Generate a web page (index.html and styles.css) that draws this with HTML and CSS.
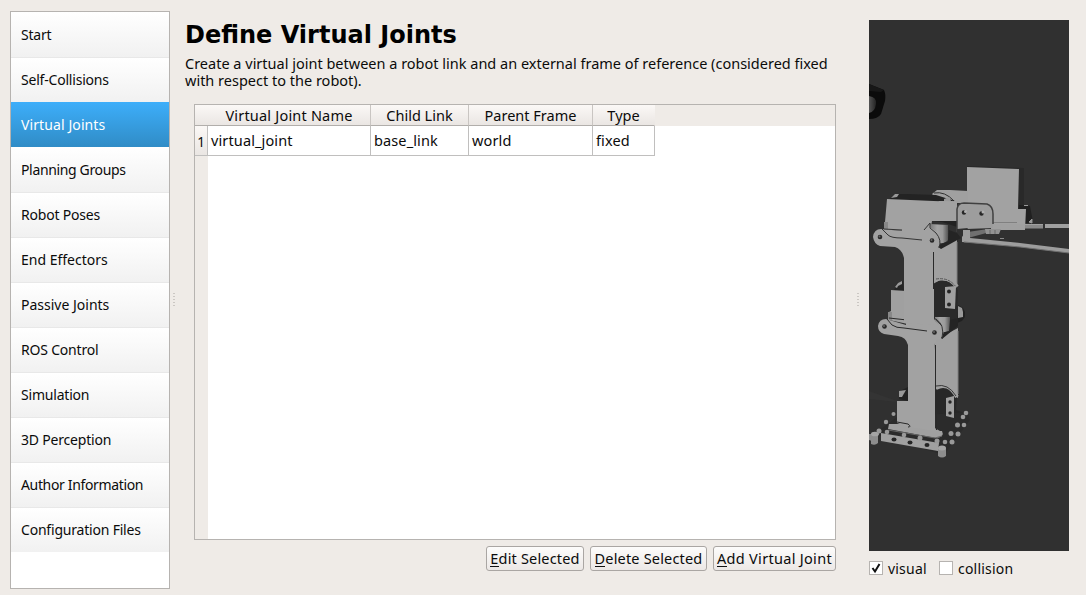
FILE: index.html
```html
<!DOCTYPE html>
<html lang="en">
<head>
<meta charset="utf-8">
<title>Define Virtual Joints</title>
<link rel="stylesheet" href="styles.css">
</head>
<body>
<div class="window">
  <nav class="steps">
    <div class="step">Start</div>
    <div class="step">Self-Collisions</div>
    <div class="step active">Virtual Joints</div>
    <div class="step tight">Planning Groups</div>
    <div class="step">Robot Poses</div>
    <div class="step even">End Effectors</div>
    <div class="step even">Passive Joints</div>
    <div class="step">ROS Control</div>
    <div class="step">Simulation</div>
    <div class="step">3D Perception</div>
    <div class="step tight">Author Information</div>
    <div class="step">Configuration Files</div>
  </nav>
  <div class="splitter"></div>
  <main class="panel">
    <h1>Define Virtual Joints</h1>
    <p class="intro">Create a virtual joint between a robot link and an external frame of reference (considered fixed<br>with respect to the robot).</p>
    <div class="table">
      <div class="head">
        <div class="corner"></div><div class="th wide">Virtual Joint Name</div><div class="th">Child Link</div><div class="th">Parent Frame</div><div class="th last">Type</div>
      </div>
      <div class="row">
        <div class="num">1</div><div class="td">virtual_joint</div><div class="td">base_link</div><div class="td">world</div><div class="td">fixed</div>
      </div>
      <div class="gutter"></div>
    </div>
    <div class="actions">
      <button class="btn edit"><span class="key">E</span>dit Selected</button>
      <button class="btn delete"><span class="key">D</span>elete Selected</button>
      <button class="btn add"><span class="key">A</span>dd Virtual Joint</button>
    </div>
  </main>
  <div class="splitter right"></div>
  <aside class="preview">
    <svg class="scene" viewBox="869 20 200 531" width="200" height="531">
      <defs>
        <linearGradient id="cyl"><stop offset="0" stop-color="#777"/><stop offset=".4" stop-color="#a4a4a4"/><stop offset=".7" stop-color="#9a9a9a"/><stop offset="1" stop-color="#555"/></linearGradient>
        <linearGradient id="lens"><stop offset="0" stop-color="#555"/><stop offset="1" stop-color="#222"/></linearGradient>
      </defs>
      <rect x="869" y="20" width="200" height="531" fill="#303030"/>
      <!-- camera -->
      <path d="M869 84L884 90Q886 94 885 101L881 114Q878 119 869 119Z" fill="#0b0b0b"/>
      <path d="M869 84L884 90L881 92L869 91Z" fill="#171717"/>
      <path d="M869 96Q877 97 876 104Q875 112 869 113Z" fill="url(#lens)"/>
      <!-- rear column -->
      <path d="M933 249L957 237V287L933 290ZM935 340L958 328V398L935 390Z" fill="#a0a0a0"/>
      <path d="M957 242V286M958 331V394" stroke="#808080"/>
      <!-- gripper motor and rods -->
      <path d="M967 166L1024 168V208L1019 222H968Z" fill="#292929"/>
      <path d="M1019 205L1030 206L1033 222L1019 224Z" fill="#202020"/>
      <path d="M1024 205.500H1028M1029 222L1032 219V223Z" stroke="#999" fill="#999"/>
      <path d="M967 167L1019 169L1018 209L1026 209L1025 230L991 229V224H967Z" fill="#a2a2a2"/>
      <path d="M993 222.500H1017" stroke="#808080"/>
      <path d="M991 224L1069 224V228L1025 228L1025 230H991Z" fill="#a0a0a0"/>
      <path d="M1025 225V228.500H1044V225" fill="#8a8a8a"/><path d="M1044 224V229" stroke="#303030" stroke-width="2"/>
      <path d="M961 233L988 229L990 232L968 238Z" fill="#707070"/>
      <path d="M985 229H1001L999 234H986Z" fill="#929292"/><path d="M990 230V234M995 230V234" stroke="#686868"/>
      <path d="M962 230H970V238L1020 243L1069 249V253L1020 247L962 242Z" fill="#9d9d9d"/>
      <path d="M964 242L1020 247L1069 253" stroke="#707070" fill="none"/>
      <path d="M1000 238.500H1004" stroke="#888"/>
      <!-- upper housing -->
      <path d="M932 194L937 190H950L968 191V203H940Z" fill="#a0a0a0"/>
      <path d="M934 193Q945 191 954 201" stroke="#303030" fill="none"/>
      <path d="M891 198L895 194L907 194L936 195L955 201L887 201Z" fill="#232323"/>
      <path d="M891 198L895 194H899L897 197Z" fill="#999"/>
      <path d="M944 199L949 197L951 201H944Z" fill="#999"/>
      <path d="M887 199L957 202V221L932 221L930 232L886 230L885 222Z" fill="#a2a2a2"/>
      <path d="M932 221H957V227L942 222Z" fill="#222"/>
      <path d="M884 222H888V231H884Z" fill="#888"/>
      <path d="M957 233V208Q958 203 964 203L987 204Q993 206 993 213V228L966 229L963 234Z" fill="#9d9d9d"/>
      <path d="M957 232V209Q958 203 964 203L987 204Q993 206 993 214V224" fill="none" stroke="#404040" stroke-width="1.5"/>
      <g fill="#262626"><circle cx="964" cy="212.500" r="2.200"/><circle cx="981.500" cy="213.500" r="2.200"/></g>
      <g fill="#b0b0b0"><circle cx="965.500" cy="211.500" r="1.500"/><circle cx="983" cy="212" r="1.500"/></g>
      <path d="M957 229L968 228L962 237L957 236Z" fill="#303030"/>
      <path d="M963 230H969V240L963 241Z" fill="#9d9d9d"/>
      <path d="M930 224L948 225V240Q945 244 939 243L932 236Z" fill="url(#cyl)"/>
      <path d="M949 230L957 233L961 238L941 249L937 246L948 241Z" fill="#242424"/>
      <!-- middle motor assembly -->
      <path d="M933 284L940 280L953 282L958 290L957 317L942 339L933 328Z" fill="#292929"/>
      <path d="M935 280Q948 274 957 287" fill="none" stroke="#a0a0a0" stroke-width="4"/>
      <path d="M936 279Q949 277 956 287" fill="none" stroke="#555" stroke-dasharray="3 1"/>
      <path d="M945 287L956 286L955 309L945 308Z" fill="#a0a0a0"/>
      <g fill="#252525"><circle cx="949" cy="291.500" r="2"/><circle cx="949" cy="304.500" r="2"/></g>
      <path d="M958 305L963 308L965 312V317L962 321L957 323Z" fill="#202020"/><path d="M958 306L962 308L963 312V317L958 318" fill="#999"/>
      <path d="M895 288L897 283L903 281L904 290H894Z" fill="#242424"/><path d="M895 287L898 283L902 281V284L898 286L897 288Z" fill="#999"/>
      <path d="M891 290L905 291V320L936 320V330L889 320V312L891 311Z" fill="#a0a0a0"/>
      <path d="M888 312H892V320H888Z" fill="#888"/>
      <path d="M935 317L950 317V331L942 333L933 327Z" fill="url(#cyl)"/>
      <path d="M950 320L958 318V326L942 339L941 333L949 331Z" fill="#242424"/>
      <!-- bottom motor assembly -->
      <path d="M935 390L943 386L954 392L957 398L956 410L968 414L942 435L933 432Z" fill="#282828"/>
      <path d="M936 388Q948 381 957 397" fill="none" stroke="#a0a0a0" stroke-width="4"/>
      <path d="M936 386Q948 383 956 396" fill="none" stroke="#383838"/>
      <path d="M899 399L900 391L908 387V401Z" fill="#222"/><path d="M899 391L906 390L902 397H899Z" fill="#999"/>
      <!-- base -->
      <path d="M869 391L897 401V402L869 399Z" fill="#343434"/>
      <path d="M874 434L897 417L968 412L970 420L944 455Z" fill="#2b2b2b"/>
      <path d="M946 398L954 396V418L946 416Z" fill="#a0a0a0"/>
      <g fill="#252525"><circle cx="950" cy="402" r="1.700"/><circle cx="950" cy="413" r="1.700"/></g>
      <path d="M881 433L939 443L938 451L881 441Z" fill="#a0a0a0"/>
      <path d="M889 424L909 424V427H933L940 431H942Q945 437 936 438L888 429Z" fill="#a0a0a0"/>
      <path d="M888 430L935 438L942 436" stroke="#666" fill="none"/>
      <g fill="#252525"><ellipse cx="894" cy="439.500" rx="2.500" ry="2"/><ellipse cx="910" cy="442.500" rx="2.500" ry="2"/><ellipse cx="927" cy="445" rx="2.500" ry="2"/></g>
      <g fill="#8d8d8d"><path d="M871 434H878V443Q875 446 871 444ZM938 448H946V456Q942 459 938 456ZM869 434H872V441L869 440Z"/></g>
      <g fill="#a5a5a5"><ellipse cx="875" cy="434" rx="4" ry="2.300"/><ellipse cx="942" cy="448" rx="4" ry="2.500"/></g>
      <g fill="#999"><circle cx="893.500" cy="414" r="2"/><circle cx="886" cy="422" r="2.200"/><circle cx="879" cy="431" r="2.500"/><circle cx="887" cy="432" r="2.300"/><circle cx="904" cy="435" r="2.300"/><circle cx="920" cy="438" r="2.500"/><circle cx="937" cy="441" r="2.500"/><circle cx="945" cy="442" r="2.300"/><circle cx="952" cy="442" r="2.500"/><circle cx="958" cy="434" r="2.500"/><circle cx="951" cy="433.500" r="2.500"/><circle cx="964" cy="425" r="2.300"/><circle cx="957.500" cy="425" r="2.500"/><circle cx="963" cy="417" r="2.300"/><circle cx="966" cy="413" r="2.300"/></g>
      <!-- lower arm -->
      <path d="M897 401H908V345Q906 337 898 336L884 334Q878 332 878 326Q879 319 886 319L906 325V320H934L943 329Q945 338 937 340Q934 342 935 350V431L909 427L897 423Z" fill="#a2a2a2"/>
      <path d="M935.500 345V391M936.500 408V430" stroke="#292929"/>
      <path d="M887 319L892 325Q896 328 904 328L927 331M889 318L907 320M897 422L908 424Q912 427 908 427" fill="none" stroke="#292929"/>
      <!-- upper arm -->
      <path d="M904 292V258Q902 249 895 247L880 246Q874 244 873 237Q874 229 881 229L902 231V227H930L937 232Q941 236 940 244Q937 250 934 252V319L936 325L904 323Z" fill="#a2a2a2"/>
      <path d="M933.500 252V289M934.500 295V318L942 326" fill="none" stroke="#292929"/>
      <path d="M882 229L888 235Q891 238 902 238L922 240M884 229L902 230M924 230L930 223V228L936 233Q942 240 939 248M936 319Q945 325 942 338" fill="none" stroke="#343434"/>
      <g fill="#292929"><circle cx="880" cy="237" r="2.300"/><circle cx="932" cy="240.500" r="2.300"/><circle cx="884.500" cy="326.500" r="2.300"/><circle cx="934.500" cy="332.500" r="2.300"/></g>
      <g fill="#666"><circle cx="879.500" cy="236.500" r="1"/><circle cx="931.500" cy="240" r="1"/><circle cx="884" cy="326" r="1"/><circle cx="934" cy="332" r="1"/></g>
    </svg>
    <div class="toggles">
      <span class="box"><svg width="12" height="12" viewBox="0 0 12 12"><path d="M2.500 6L5 9.500L9.500 2" fill="none" stroke="#111" stroke-width="2"/></svg></span><span class="visual">visual</span>
      <span class="box"></span><span class="collision">collision</span>
    </div>
  </aside>
</div>
</body>
</html>
```
FILE: styles.css
```css
* { box-sizing: border-box; }
body { margin: 0; background: #efebe7; color: #0b0b0b; font: 14px/17px "Noto Sans", sans-serif; }
.window { display: flex; width: 1086px; height: 595px; padding-left: 10px; overflow: hidden; white-space: nowrap; }
.steps { width: 160px; height: 578px; margin-top: 11px; border: 1px solid #b6b3b0; background: #fff; letter-spacing: -.2px; }
.step { height: 45px; padding: 14px 10px; border-bottom: 1px solid #e8e8e8; background: linear-gradient(#fff, #f1f1f1); }
.step:first-child { height: 46px; }
.step:nth-child(2) { height: 44px; border-bottom: 0; }
.step:nth-child(2), .active { padding-top: 13px; }
.active + .step { height: 46px; }
.step:nth-child(n+5) { padding-top: 13px; }
.step:last-child { height: 44px; border-bottom: 0; }
.tight { letter-spacing: -.35px; }
.even { letter-spacing: 0; }
.active { height: 45px; padding-top: 14px; color: #fff; border: 0; background: linear-gradient(#3daefa, #308cc6); letter-spacing: .1px; }
.splitter { width: 2px; height: 15px; margin: 293px 10px 0 3px; background: repeating-linear-gradient(#cbc7c3 0 1px, transparent 1px 3px); }
.panel { width: 651px; padding-top: 20px; font-size: 14.5px; }
h1 { margin: 0; font: bold 24px/30px "DejaVu Sans", sans-serif; color: #000; }
.intro { height: 34px; margin: 5px 0 15px; }
.table { width: 642px; height: 436px; margin-left: 9px; border: 1px solid #b6b3b0; background: #fff; display: flex; flex-direction: column; }
.head, .row { display: grid; grid-template-columns: 13px 163px 98px 124px 62px; }
.head { height: 21px; flex: none; background: #efebe7; }
.th, .corner { height: 21px; background: linear-gradient(#fbf8f6, #eae6e3); border-bottom: 1px solid #b1aeab; text-align: center; line-height: 20px; }
.th { border-right: 1px solid #c9c5c2; }
.th.last { border-right-color: transparent; }
.wide { letter-spacing: .2px; }
.row { height: 30px; flex: none; }
.num, .td { height: 30px; border: 1px solid #c0bfbe; border-width: 0 1px 1px 0; line-height: 28px; }
.num { background: linear-gradient(#fbf8f6, #eae6e3); text-align: center; font-size: 13.5px; line-height: 32px; }
.td { padding-left: 3px; letter-spacing: .12px; }
.gutter { width: 13px; flex: 1; background: #efebe7; }
.actions { display: flex; justify-content: flex-end; gap: 6px; margin: 6px 0 0; }
.btn { height: 25px; padding: 0; border: 1px solid #aaa6a3; border-radius: 3px; background: linear-gradient(#fdfcfb, #ece8e6); font: inherit; color: inherit; letter-spacing: .18px; }
.edit { width: 98px; }
.delete { width: 117px; }
.add { width: 123px; letter-spacing: .3px; }
.key { display: inline-block; height: 17px; border-bottom: 1px solid #111; }
.right { margin-left: 21px; }
.preview { padding-top: 20px; }
.scene { display: block; }
.toggles { display: flex; height: 34px; align-items: center; letter-spacing: .2px; }
.box { width: 14px; height: 14px; border: 1px solid #b6b3b0; background: #fff; }
.box svg { display: block; }
.visual, .collision { margin-left: 5px; }
.visual { width: 51px; }
```
